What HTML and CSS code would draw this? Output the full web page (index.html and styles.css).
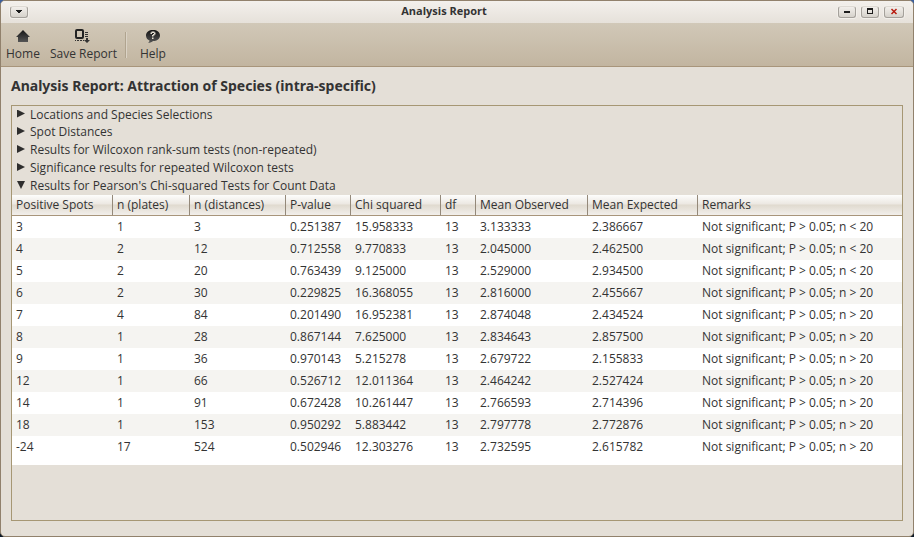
FILE: index.html
```html
<!DOCTYPE html>
<html lang="en">
<head>
<meta charset="utf-8">
<title>Analysis Report</title>
<link rel="stylesheet" href="styles.css">
</head>
<body>
<div class="window">
  <header class="titlebar">
    <button class="win-btn" type="button" aria-label="Window menu">
      <svg width="16" height="10" viewBox="0 0 16 10"><path d="M5 3h6v1h-1v1H9v1H7V5H6V4H5z" fill="#1c1c1c"/></svg>
    </button>
    <span class="title">Analysis Report</span>
    <div class="controls">
      <button class="win-btn" type="button" aria-label="Minimize">
        <svg width="16" height="10" viewBox="0 0 16 10"><path d="M5 4h6v2H5z" fill="#1c1c1c"/></svg>
      </button>
      <button class="win-btn" type="button" aria-label="Maximize">
        <svg width="16" height="10" viewBox="0 0 16 10"><path fill-rule="evenodd" d="M5 1h6v6H5zM6 3v3h4V3z" fill="#1c1c1c"/></svg>
      </button>
      <button class="win-btn" type="button" aria-label="Close">
        <svg width="18" height="10" viewBox="0 0 18 10"><path d="M6.500 2l5 5M11.500 2l-5 5" stroke="#b81c10" stroke-width="1.500"/></svg>
      </button>
    </div>
  </header>
  <nav class="toolbar">
    <button class="tool" type="button">
      <svg width="16" height="16" viewBox="0 0 16 16"><defs><linearGradient id="ink" x1="0" y1="0" x2="0" y2="1"><stop offset="0" stop-color="#151515"/><stop offset="1" stop-color="#555"/></linearGradient></defs><path d="M8 2l7 7h-2v5H3V9H1z" fill="url(#ink)"/></svg>
      Home
    </button>
    <button class="tool" type="button">
      <svg width="16" height="16" viewBox="0 0 16 16"><rect x="1" y="2" width="7" height="8" rx="1" fill="none" stroke="#222" stroke-width="2"/><path d="M10 4h3v1h-3zM10 6h3v1h-3zM10 8h3v1h-3zM11 10h2v2h2l-3 3-3-3h2zM0 12h1v1H0zM2 12h2v1H2zM5 12h2v1H5zM8 12h1v1H8z" fill="#333"/></svg>
      Save Report
    </button>
    <span class="divider"></span>
    <button class="tool" type="button">
      <svg width="16" height="16" viewBox="0 0 16 16"><path d="M8 2c4 0 7 2 7 5.500S12 13 8 13c-1 1.200-2.500 1.800-5 1.800 1-.6 1.500-1.300 1.500-2.300C2.500 11.700 1 10 1 7.500 1 4 4 2 8 2z" fill="url(#ink)"/><path d="M5.500 6V4.500h1v-1h3v1h1v2h-1v1h-1v1H7V7h1V6h1V5H7v1zM7 9.500h1.500V11H7z" fill="#e8e2d6"/></svg>
      Help
    </button>
  </nav>
  <main class="content">
    <h1>Analysis Report: Attraction of Species (intra-specific)</h1>
    <section class="panel">
      <details><summary>Locations and Species Selections</summary></details>
      <details><summary>Spot Distances</summary></details>
      <details><summary>Results for Wilcoxon rank-sum tests (non-repeated)</summary></details>
      <details><summary>Significance results for repeated Wilcoxon tests</summary></details>
      <details open>
        <summary>Results for Pearson's Chi-squared Tests for Count Data</summary>
        <div class="sheet">
          <table>
            <colgroup><col class="c-spots"><col class="c-plates"><col class="c-dist"><col class="c-p"><col class="c-chi"><col class="c-df"><col class="c-obs"><col class="c-exp"><col></colgroup>
            <thead><tr><th>Positive Spots</th><th>n (plates)</th><th>n (distances)</th><th>P-value</th><th>Chi squared</th><th>df</th><th>Mean Observed</th><th>Mean Expected</th><th>Remarks</th></tr></thead>
            <tbody>
              <tr><td>3</td><td>1</td><td>3</td><td>0.251387</td><td>15.958333</td><td>13</td><td>3.133333</td><td>2.386667</td><td>Not significant; P &gt; 0.05; n &lt; 20</td></tr>
              <tr><td>4</td><td>2</td><td>12</td><td>0.712558</td><td>9.770833</td><td>13</td><td>2.045000</td><td>2.462500</td><td>Not significant; P &gt; 0.05; n &lt; 20</td></tr>
              <tr><td>5</td><td>2</td><td>20</td><td>0.763439</td><td>9.125000</td><td>13</td><td>2.529000</td><td>2.934500</td><td>Not significant; P &gt; 0.05; n &lt; 20</td></tr>
              <tr><td>6</td><td>2</td><td>30</td><td>0.229825</td><td>16.368055</td><td>13</td><td>2.816000</td><td>2.455667</td><td>Not significant; P &gt; 0.05; n &gt; 20</td></tr>
              <tr><td>7</td><td>4</td><td>84</td><td>0.201490</td><td>16.952381</td><td>13</td><td>2.874048</td><td>2.434524</td><td>Not significant; P &gt; 0.05; n &gt; 20</td></tr>
              <tr><td>8</td><td>1</td><td>28</td><td>0.867144</td><td>7.625000</td><td>13</td><td>2.834643</td><td>2.857500</td><td>Not significant; P &gt; 0.05; n &gt; 20</td></tr>
              <tr><td>9</td><td>1</td><td>36</td><td>0.970143</td><td>5.215278</td><td>13</td><td>2.679722</td><td>2.155833</td><td>Not significant; P &gt; 0.05; n &gt; 20</td></tr>
              <tr><td>12</td><td>1</td><td>66</td><td>0.526712</td><td>12.011364</td><td>13</td><td>2.464242</td><td>2.527424</td><td>Not significant; P &gt; 0.05; n &gt; 20</td></tr>
              <tr><td>14</td><td>1</td><td>91</td><td>0.672428</td><td>10.261447</td><td>13</td><td>2.766593</td><td>2.714396</td><td>Not significant; P &gt; 0.05; n &gt; 20</td></tr>
              <tr><td>18</td><td>1</td><td>153</td><td>0.950292</td><td>5.883442</td><td>13</td><td>2.797778</td><td>2.772876</td><td>Not significant; P &gt; 0.05; n &gt; 20</td></tr>
              <tr><td>-24</td><td>17</td><td>524</td><td>0.502946</td><td>12.303276</td><td>13</td><td>2.732595</td><td>2.615782</td><td>Not significant; P &gt; 0.05; n &gt; 20</td></tr>
            </tbody>
          </table>
        </div>
      </details>
    </section>
  </main>
</div>
</body>
</html>
```
FILE: styles.css
```css
* {
  box-sizing: border-box;
}

body {
  margin: 0;
  background: linear-gradient(#3c5f9c 50%, #0b1826 50%);
  color: #333;
  font: 12px/18px "Open Sans", "Noto Sans", sans-serif;
}

button {
  padding: 0;
  border: 0;
  background: none;
  color: inherit;
  font: inherit;
}

svg {
  display: block;
}

.window {
  display: flex;
  flex-direction: column;
  min-height: 100vh;
  overflow: hidden;
  border: 1px solid #91816c;
  border-radius: 5px;
  background: #e4dfd7;
}

.titlebar {
  display: grid;
  grid-template-columns: 1fr auto 1fr;
  align-items: center;
  height: 22px;
  padding: 0 9px;
  background: linear-gradient(#f3f0ec, #e6e1da);
}

.title {
  margin-right: 26px;
  padding-bottom: 2px;
  font-weight: 700;
  font-size: 11px;
}

.controls {
  display: flex;
  justify-self: end;
  gap: 5px;
}

.win-btn {
  justify-self: start;
  border: 1px solid #a5a19b;
  border-top-color: #dedad4;
  border-radius: 3px;
  background: linear-gradient(#f2efeb, #d6d2cb);
  box-shadow: 0 0 0 1px #f3f0eb;
}

.toolbar {
  display: flex;
  align-items: center;
  height: 44px;
  padding: 0 1px;
  border-bottom: 1px solid #a8957b;
  background: linear-gradient(#d1c8b8, #c2b5a0);
}

.tool {
  display: flex;
  flex-direction: column;
  align-items: center;
  gap: 1px;
  padding: 2px 4px 0;
}

.tool + .tool {
  margin-left: 2px;
}

.divider {
  width: 2px;
  height: 26px;
  margin: 0 9px 0 4px;
  border-left: 1px solid #b0a48f;
  border-right: 1px solid #dbd3c6;
}

.content {
  display: flex;
  flex: 1;
  flex-direction: column;
  padding: 10px 10px 15px;
}

h1 {
  margin: 0 0 10px;
  font-family: "Noto Sans", sans-serif;
  font-size: 14px;
  line-height: 18px;
}

.panel {
  flex: 1;
  border: 1px solid #a69774;
}

summary {
  display: flex;
  align-items: center;
  height: 18px;
  padding-left: 5px;
  white-space: nowrap;
}

details:first-child summary {
  height: 17px;
}

summary::before {
  width: 8px;
  height: 8px;
  margin: 0 5px 2px 0;
  background: #2e2e2e;
  clip-path: polygon(0 0, 100% 50%, 0 100%);
  content: "";
}

details[open] > summary::before {
  clip-path: polygon(0 0, 100% 0, 50% 100%);
}

.sheet {
  padding-bottom: 7px;
  background: #fff;
}

table {
  width: 100%;
  border-collapse: separate;
  border-spacing: 0;
  table-layout: fixed;
}

th,
td {
  padding: 0 4px;
  text-align: left;
  white-space: nowrap;
}

th {
  height: 21px;
  border-right: 1px solid #94897a;
  border-bottom: 1px solid #a8957b;
  background: linear-gradient(#fdfdfc, #ece8e2 45%, #e0dacf 50%, #f2efeb);
  font-weight: 400;
}

th:last-child {
  border-right: 0;
}

td {
  height: 22px;
}

tbody tr:nth-child(even) {
  background: #f5f4f1;
}

.c-spots { width: 101px; }
.c-plates { width: 77px; }
.c-dist { width: 96px; }
.c-p { width: 65px; }
.c-chi { width: 90px; }
.c-df { width: 35px; }
.c-obs { width: 112px; }
.c-exp { width: 110px; }
```
